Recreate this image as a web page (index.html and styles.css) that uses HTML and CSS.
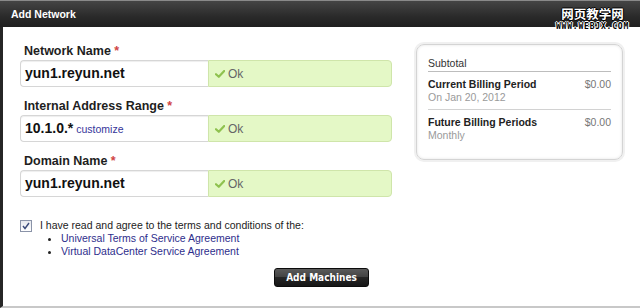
FILE: index.html
```html
<!DOCTYPE html>
<html lang="en">
<head>
  <meta charset="UTF-8">
  <title>Add Network</title>
  <link rel="stylesheet" href="styles.css">
</head>
<body>

  <div class="dialog">
    <div class="titlebar">
      <span class="title">Add Network</span>
      <div class="watermark">
        <span class="wm-cn">网页教学网</span>
        <span class="wm-en">WWW.WEBJX.COM</span>
      </div>
    </div>

    <div class="content">
      <div class="main">
        <div class="fields">
          <div class="field">
            <label>Network Name <span class="req">*</span></label>
            <div class="input-row">
              <div class="value">yun1.reyun.net</div>
              <div class="status">
                <svg class="check" width="10" height="8" viewBox="0 0 10 8"><path d="M1 4.2 L3.8 6.8 L9.2 1" fill="none" stroke="#8fc24f" stroke-width="2.2" stroke-linecap="round" stroke-linejoin="round"/></svg>
                Ok
              </div>
            </div>
          </div>

          <div class="field">
            <label>Internal Address Range <span class="req">*</span></label>
            <div class="input-row">
              <div class="value">10.1.0.*<a href="#" class="customize">customize</a></div>
              <div class="status">
                <svg class="check" width="10" height="8" viewBox="0 0 10 8"><path d="M1 4.2 L3.8 6.8 L9.2 1" fill="none" stroke="#8fc24f" stroke-width="2.2" stroke-linecap="round" stroke-linejoin="round"/></svg>
                Ok
              </div>
            </div>
          </div>

          <div class="field">
            <label>Domain Name <span class="req">*</span></label>
            <div class="input-row">
              <div class="value">yun1.reyun.net</div>
              <div class="status">
                <svg class="check" width="10" height="8" viewBox="0 0 10 8"><path d="M1 4.2 L3.8 6.8 L9.2 1" fill="none" stroke="#8fc24f" stroke-width="2.2" stroke-linecap="round" stroke-linejoin="round"/></svg>
                Ok
              </div>
            </div>
          </div>
        </div>

        <div class="summary">
          <div class="summary-head">Subtotal</div>
          <div class="summary-row">
            <div class="row-top"><b>Current Billing Period</b><span class="price">$0.00</span></div>
            <div class="row-sub">On Jan 20, 2012</div>
          </div>
          <div class="summary-row last">
            <div class="row-top"><b>Future Billing Periods</b><span class="price">$0.00</span></div>
            <div class="row-sub">Monthly</div>
          </div>
        </div>
      </div>

      <div class="terms">
        <span class="checkbox">
          <svg width="8" height="8" viewBox="0 0 8 8"><path d="M1 4 L3 6.5 L7 1" fill="none" stroke="#3a4a7a" stroke-width="1.4"/></svg>
        </span>
        <div class="terms-text">
          I have read and agree to the terms and conditions of the:
          <ul>
            <li><a href="#">Universal Terms of Service Agreement</a></li>
            <li><a href="#">Virtual DataCenter Service Agreement</a></li>
          </ul>
        </div>
      </div>

      <div class="actions">
        <button>Add Machines</button>
      </div>
    </div>
  </div>

</body>
</html>
```

FILE: styles.css
```css
body {
  margin: 0;
  font-family: 'Liberation Sans', Arial, sans-serif;
  background: #fff;
  color: #222;
}
.dialog {
  width: 640px;
  height: 308px;
  display: flex;
  flex-direction: column;
}
.titlebar {
  position: relative;
  height: 26px;
  border-top: 1px solid #8a8a8a;
  background: linear-gradient(#454545, #2a2a2a 60%, #1f1f1f);
  display: flex;
  align-items: center;
  padding-left: 11px;
}
.title {
  color: #fff;
  font-weight: bold;
  font-size: 10.5px;
}
.watermark {
  position: absolute;
  right: 11px;
  top: 5px;
  display: flex;
  flex-direction: column;
  align-items: center;
}
.wm-cn {
  font-family: 'Noto Sans CJK SC', sans-serif;
  font-weight: bold;
  font-size: 12.5px;
  line-height: 16px;
  color: #fff;
  text-shadow: 1px 0 #000, -1px 0 #000, 0 1px #000, 0 -1px #000;
}
.wm-en {
  font-family: 'DejaVu Sans Mono', monospace;
  font-weight: bold;
  font-size: 8px;
  line-height: 9px;
  letter-spacing: 0.8px;
  color: #000;
  text-shadow: 1px 0 #fff, -1px 0 #fff, 0 1px #fff, 0 -1px #fff;
}
.content {
  flex: 1;
  border-left: 3px solid #262626;
  border-bottom: 2px solid #c8c8c8;
  padding: 16px 17px 0 17px;
}
.main {
  display: flex;
  align-items: flex-start;
  gap: 24px;
}
.fields {
  width: 372px;
}
.field {
  margin-bottom: 11px;
}
.field:last-child {
  margin-bottom: 0;
}
.field label {
  display: block;
  font-weight: bold;
  font-size: 12.5px;
  line-height: 16px;
  margin: 0 0 1px 4px;
  color: #1e1e1e;
}
.req {
  color: #d04545;
}
.input-row {
  display: flex;
  height: 27px;
}
.value {
  width: 183px;
  border: 1px solid #d6d6d6;
  border-right: none;
  border-radius: 4px 0 0 4px;
  padding-left: 4px;
  font-weight: bold;
  font-size: 14px;
  line-height: 25px;
  color: #111;
  box-shadow: inset 0 1px 1px #eee;
}
.customize {
  margin-left: 3px;
  font-weight: normal;
  font-size: 10.5px;
  color: #35359a;
  text-decoration: none;
}
.status {
  flex: 1;
  background: #e4f8c6;
  border: 1px solid #cfe5aa;
  border-radius: 0 4px 4px 0;
  display: flex;
  align-items: center;
  padding-left: 6px;
  font-size: 12px;
  color: #666;
}
.check {
  margin-right: 3px;
}
.summary {
  width: 183px;
  margin-top: 1px;
  border: 1px solid #d4d4d4;
  border-radius: 8px;
  box-shadow: 0 0 0 2px #f0f0f0, inset 0 0 3px #e2e2e2;
  padding: 11px 11px 17px 11px;
  font-size: 10.5px;
}
.summary-head {
  line-height: 14px;
  padding-bottom: 1px;
  border-bottom: 1px solid #bdbdbd;
  color: #333;
}
.summary-row {
  padding: 6px 0 5px 0;
  border-bottom: 1px solid #d2d2d2;
}
.summary-row.last {
  border-bottom: none;
  padding-bottom: 0;
}
.row-top {
  display: flex;
  justify-content: space-between;
  line-height: 13px;
}
.row-top b {
  color: #222;
}
.price {
  color: #777;
}
.row-sub {
  line-height: 13px;
  color: #9a9a9a;
}
.terms {
  display: flex;
  gap: 8px;
  margin-top: 22px;
  font-size: 10.5px;
  line-height: 13px;
  color: #222;
}
.checkbox {
  width: 10px;
  height: 10px;
  margin-top: 1px;
  border: 1px solid #8a93a8;
  background: linear-gradient(#e6e8ee, #fff);
  display: flex;
  align-items: center;
  justify-content: center;
}
.terms-text ul {
  margin: 0;
  padding-left: 21px;
}
.terms-text a {
  color: #2e2e8c;
  text-decoration: none;
}
.actions {
  display: flex;
  justify-content: center;
  margin-top: 10px;
}
button {
  width: 95px;
  height: 19px;
  padding: 0;
  border: 1px solid #0c0c0c;
  border-radius: 3px;
  background: linear-gradient(#5a5a5a, #444 45%, #262626 50%, #161616);
  color: #fff;
  font-family: 'DejaVu Sans Condensed', 'DejaVu Sans', sans-serif;
  font-weight: bold;
  font-size: 10px;
  cursor: pointer;
}
```
